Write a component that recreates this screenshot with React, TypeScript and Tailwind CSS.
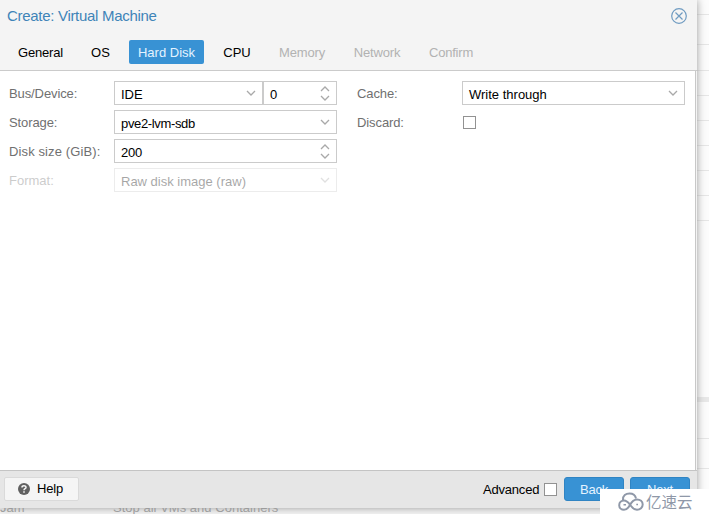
import type { ReactNode } from 'react';

const Chevron = ({ up = false }: { up?: boolean }) => (
  <svg width="10" height="6" viewBox="0 0 10 6" fill="none" stroke="#a9a9a9" strokeWidth="1.3">
    <path d={up ? 'M1 5 L5 1 L9 5' : 'M1 1 L5 5 L9 1'} />
  </svg>
);

const Spinner = () => (
  <span className="flex flex-col gap-[3px]">
    <Chevron up />
    <Chevron />
  </span>
);

type FieldProps = {
  value: string;
  className: string;
  text?: string;
  spinner?: boolean;
};

const Field = ({ value, className, text = '', spinner = false }: FieldProps) => (
  <div className={`flex h-6 items-center justify-between border border-[#cbcbcb] bg-white pl-1.5 pr-[6px] text-black ${className}`}>
    <span className={`pt-[3px] ${text}`}>{value}</span>
    {spinner ? <Spinner /> : <span className="-mt-px"><Chevron /></span>}
  </div>
);

const Row = ({ label, text = '', className = '', children }: { label: string; text?: string; className?: string; children: ReactNode }) => (
  <div className={`flex h-6 items-center text-[#707070] ${className}`}>
    <span className={`w-[105px] pt-px ${text}`}>{label}</span>
    {children}
  </div>
);

const tabs = [
  { label: 'General', style: 'w-[63px] text-black tracking-[-0.2px]' },
  { label: 'OS', style: 'w-[37px] text-black' },
  { label: 'Hard Disk', style: 'w-[75px] rounded-[2px] bg-[#3892d4] text-[#e4f3ff]' },
  { label: 'CPU', style: 'w-[46px] text-black' },
  { label: 'Memory', style: 'w-[64px] tracking-[-0.15px] text-[#b2b2b2]' },
  { label: 'Network', style: 'w-[66px] tracking-[-0.15px] text-[#b2b2b2]' },
  { label: 'Confirm', style: 'w-[62px] tracking-[-0.2px] text-[#b2b2b2]' },
];

const rules = [
  'top-[14px]', 'top-[44px]', 'top-[70px]', 'top-[95px]', 'top-[120px]', 'top-[145px]',
  'top-[170px]', 'top-[195px]', 'top-[220px]', 'top-[438px]', 'top-[468px]',
];

export default function App() {
  return (
    <div className="relative h-[514px] w-[709px] overflow-hidden bg-[#fcfcfc] font-['Liberation_Sans','Noto_Sans_CJK_SC',sans-serif] text-[13px] leading-4 whitespace-nowrap">
      {rules.map((top) => (
        <div key={top} className={`absolute right-0 h-px w-3 bg-[#e6e6e6] ${top}`} />
      ))}
      <div className="absolute top-[397px] right-0 h-[5px] w-3 bg-[#e8e8e8]" />
      <div className="absolute top-[500px] left-0 flex h-[14px] w-full bg-[#f5f5f5] text-[#a0a0a0]">
        <span className="w-[113px]">Jam</span>
        <span className="tracking-[0.02px]">Stop all VMs and Containers</span>
      </div>

      <div className="relative flex h-[508px] w-[697px] flex-col bg-[#f4f4f4] shadow-[0_0_8px_#999]">
        <header className="flex h-[71px] flex-col border-b border-[#cbcbcb]">
          <div className="flex h-10 items-start justify-between pl-[7px] pr-[10px] pt-2">
            <h1 className="text-[15px] leading-4 tracking-[-0.3px] text-[#3f84b8]">Create: Virtual Machine</h1>
            <svg width="16" height="16" viewBox="0 0 16 16" fill="none" stroke="#6f9bc1" strokeWidth="1.2">
              <circle cx="8" cy="8" r="7.3" />
              <path d="M4.5 4.5 L11.5 11.5 M11.5 4.5 L4.5 11.5" />
            </svg>
          </div>
          <nav className="flex gap-[10px] pl-[9px]">
            {tabs.map((t) => (
              <span key={t.label} className={`flex h-6 items-center justify-center pt-px ${t.style}`}>{t.label}</span>
            ))}
          </nav>
        </header>

        <main className="mr-px flex h-[399px] gap-5 border-r border-[#c8c8c8] bg-white pt-[10px] pl-[9px]">
          <div className="flex w-[328px] flex-col gap-[5px]">
            <Row label="Bus/Device:" text="tracking-[-0.1px]">
              <Field value="IDE" className="w-[149px]" />
              <Field value="0" className="w-[74px]" spinner />
            </Row>
            <Row label="Storage:" text="tracking-[-0.1px]">
              <Field value="pve2-lvm-sdb" className="w-[223px]" text="tracking-[-0.35px]" />
            </Row>
            <Row label="Disk size (GiB):" text="tracking-[0.12px]">
              <Field value="200" className="w-[223px]" text="tracking-[-0.2px]" spinner />
            </Row>
            <Row label="Format:" className="opacity-35">
              <Field value="Raw disk image (raw)" className="w-[223px]" />
            </Row>
          </div>
          <div className="flex flex-col gap-[5px]">
            <Row label="Cache:" text="tracking-[-0.1px]">
              <Field value="Write through" className="w-[223px]" />
            </Row>
            <Row label="Discard:" text="tracking-[-0.1px]">
              <span className="ml-px h-[13px] w-[13px] border border-[#929292] bg-white" />
            </Row>
          </div>
        </main>

        <footer className="flex h-[38px] items-start border-t border-[#c4c4c4] bg-[#e6e6e6] pt-[6px] pl-1">
          <button className="flex h-6 w-[75px] items-center gap-[7px] rounded-[2px] border border-[#dadada] bg-[#f5f5f5] pl-[13px] text-black">
            <svg width="12" height="12" viewBox="0 0 12 12">
              <circle cx="6" cy="6" r="6" fill="#606060" />
              <path d="M4 4.5 C4 2.3 8 2.3 8 4.4 C8 5.8 6 5.7 6 7.2 M6 8.2 V9.7" fill="none" stroke="#f5f5f5" strokeWidth="1.5" />
            </svg>
            <span className="tracking-[-0.15px]">Help</span>
          </button>
          <span className="ml-[404px] w-[61px] pt-[5px] tracking-[-0.2px] text-black">Advanced</span>
          <span className="mt-[6px] h-[13px] w-[13px] border border-[#929292] bg-white" />
          <button className="ml-[7px] flex h-6 w-[60px] items-center justify-center rounded-[3px] border border-[#3084c3] bg-[#3892d4] pt-px tracking-[-0.2px] text-[#e4f3ff]">Back</button>
          <button className="ml-[6px] flex h-6 w-[60px] items-center justify-center rounded-[3px] border border-[#3084c3] bg-[#3892d4] pt-px tracking-[-0.2px] text-[#e4f3ff]">Next</button>
        </footer>
      </div>

      <div className="absolute right-0 bottom-0 flex h-[25px] w-[109px] items-start bg-white pl-[18px] text-[#8f98a8]">
        <svg className="mt-[3px]" width="26" height="20" viewBox="0 0 26 20" fill="none" stroke="#8f98a8" strokeWidth="2">
          <path d="M5 8 C4.5 3.5 8 1.5 11.5 1.5 C15.5 1.5 17.5 4 18 6.5" />
          <path d="M1.2 13.2 C1.2 10.3 3.5 8.5 6 8.5 C9.5 8.5 10.8 11.2 13 14 C14.8 16.4 16.2 17.8 19 17.8 C22.2 17.8 24.7 15.5 24.7 12.6 C24.7 9.5 22.2 7.4 19 7.4 C15.8 7.4 13.5 10 11.8 13.2 C10.3 16 9 17.8 6 17.8 C3.4 17.8 1.2 16 1.2 13.2 Z" />
          <path d="M5.5 12.8 H8 M18.3 12.6 H20" strokeWidth="1.5" />
        </svg>
        <span className="ml-[2px] font-['Noto_Sans_CJK_SC',sans-serif] text-[15.5px] leading-6">亿速云</span>
      </div>
    </div>
  );
}
